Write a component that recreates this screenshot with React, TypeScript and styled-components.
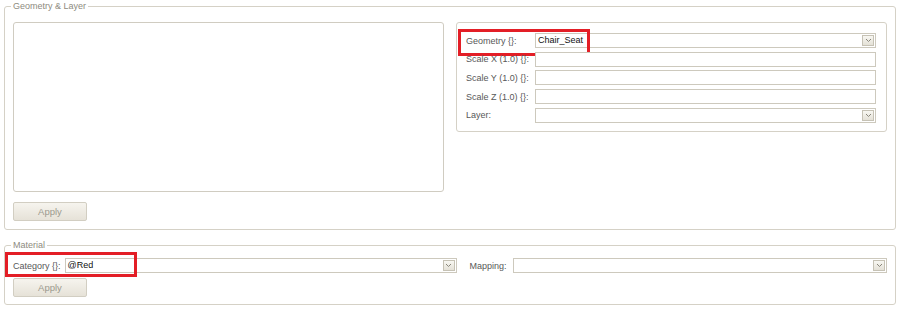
import styled, { createGlobalStyle } from "styled-components";

const GlobalStyle = createGlobalStyle`
    body {
        margin: 0;
        background: #ffffff;
        font-family: "Liberation Sans", Arial, sans-serif;
    }
    * { box-sizing: border-box; }
`;

const Group = styled.fieldset<{ $gap?: number; $pad?: number }>`
    margin: ${(p) => p.$gap || 0}px 4px 0 4px;
    padding: ${(p) => p.$pad || 10}px 8px ${(p) => (p.$pad ? p.$pad : 8)}px 8px;
    border: 1px solid #d5d1c6;
    border-radius: 3px;
    min-width: 0;
`;

const Legend = styled.legend`
    margin-left: -2px;
    padding: 0 2px;
    font-size: 9px;
    line-height: 12px;
    color: #8e8b80;
`;

const Columns = styled.div`
    display: grid;
    grid-template-columns: 1fr 1fr;
    column-gap: 12px;
    align-items: start;
`;

const Preview = styled.div`
    height: 170px;
    border: 1px solid #d0ccc1;
    border-radius: 3px;
    background: #fff;
`;

const Panel = styled.div`
    display: flex;
    flex-direction: column;
    gap: 3.7px;
    padding: 10px 10px 8px 9px;
    border: 1px solid #d5d1c6;
    border-radius: 3px;
`;

const FormRow = styled.div`
    position: relative;
    display: grid;
    grid-template-columns: 69px 1fr;
    align-items: center;
`;

const Label = styled.span`
    font-size: 9px;
    color: #585858;
    white-space: nowrap;
`;

const Field = styled.div`
    position: relative;
    height: 15px;
    border: 1px solid #cdc9bd;
    background: #fff;
    font-size: 9px;
    line-height: 13px;
    padding-left: 2px;
    color: #111;
    min-width: 0;
`;

const DropButton = styled.span`
    position: absolute;
    top: 1px;
    right: 1px;
    width: 12px;
    height: 11px;
    border: 1px solid #c6c2b5;
    background: linear-gradient(#f8f7f2, #e4e1d7);
    display: flex;
    align-items: center;
    justify-content: center;
`;

const Highlight = styled.div<{ $left: number; $top: number; $w: number; $h: number }>`
    position: absolute;
    left: ${(p) => p.$left}px;
    top: ${(p) => p.$top}px;
    width: ${(p) => p.$w}px;
    height: ${(p) => p.$h}px;
    border: 3px solid #e31e26;
    pointer-events: none;
`;

const Button = styled.button<{ $top: number }>`
    display: block;
    margin-top: ${(p) => p.$top}px;
    width: 74px;
    height: 19px;
    padding: 0;
    border: 1px solid #d2cec2;
    border-radius: 2px;
    background: linear-gradient(#f6f4ee, #e6e2d8);
    font-family: "Liberation Sans", Arial, sans-serif;
    font-size: 9.5px;
    color: #9c998e;
`;

const MaterialRow = styled.div`
    position: relative;
    display: grid;
    grid-template-columns: auto 392px auto 1fr;
    align-items: center;
`;

const Inline = styled(Label)<{ $left?: number; $right: number }>`
    margin-left: ${(p) => p.$left || 0}px;
    margin-right: ${(p) => p.$right}px;
`;

const Chevron = () => (
    <svg width="7" height="5" viewBox="0 0 7 5">
        <path d="M1 1 L3.5 3.5 L6 1" fill="none" stroke="#8a877c" strokeWidth="1" />
    </svg>
);

const Select = ({ value }: { value?: string }) => (
    <Field>
        {value}
        <DropButton>
            <Chevron />
        </DropButton>
    </Field>
);

const scales = ["Scale X (1.0) {}:", "Scale Y (1.0) {}:", "Scale Z (1.0) {}:"];

export default function App() {
    return (
        <>
            <GlobalStyle />
            <Group>
                <Legend>Geometry &amp; Layer</Legend>
                <Columns>
                    <div>
                        <Preview />
                        <Button $top={10}>Apply</Button>
                    </div>
                    <Panel>
                        <FormRow>
                            <Label>Geometry {"{}"}:</Label>
                            <Select value="Chair_Seat" />
                            <Highlight $left={-8} $top={-4} $w={132} $h={27} />
                        </FormRow>
                        {scales.map((s) => (
                            <FormRow key={s}>
                                <Label>{s}</Label>
                                <Field />
                            </FormRow>
                        ))}
                        <FormRow>
                            <Label>Layer:</Label>
                            <Select />
                        </FormRow>
                    </Panel>
                </Columns>
            </Group>
            <Group $gap={9} $pad={7}>
                <Legend>Material</Legend>
                <MaterialRow>
                    <Inline $right={4}>Category {"{}"}:</Inline>
                    <Select value="@Red" />
                    <Inline $left={13} $right={6}>Mapping:</Inline>
                    <Select />
                    <Highlight $left={-8} $top={-6} $w={132} $h={25} />
                </MaterialRow>
                <Button $top={5}>Apply</Button>
            </Group>
        </>
    );
}
